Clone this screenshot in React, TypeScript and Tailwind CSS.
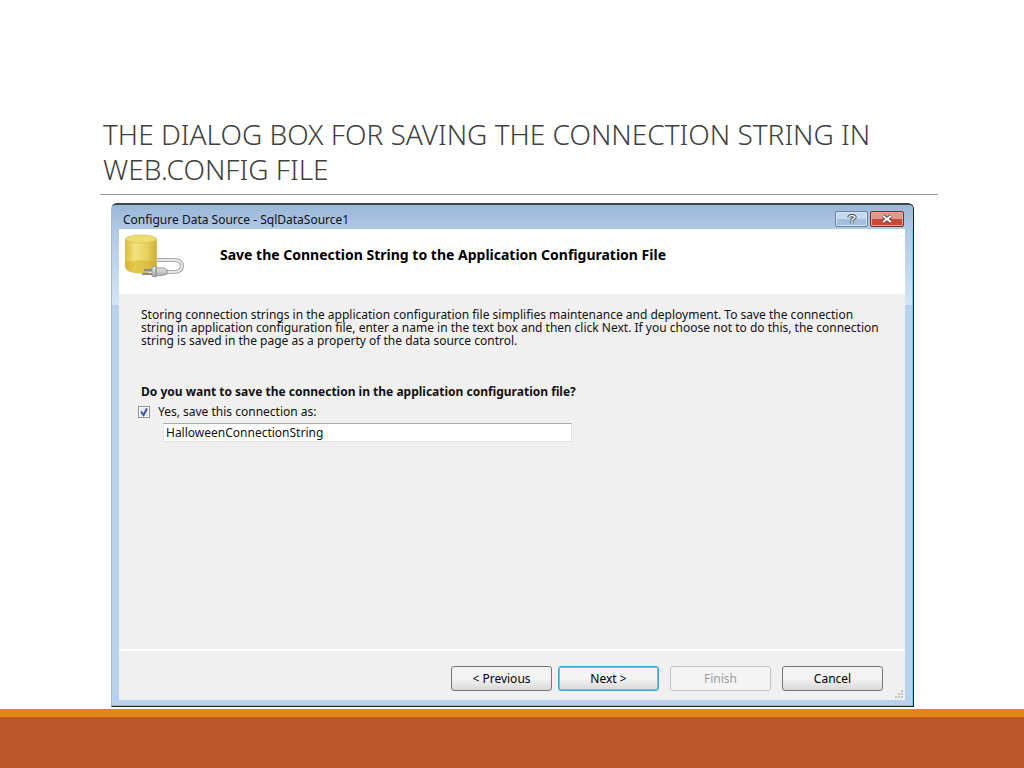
import React, { useState } from 'react';
import clsx from 'clsx';

const DatabasePlugIcon: React.FC = () => (
  <svg width="62" height="46" viewBox="0 0 62 46" aria-hidden="true">
    <defs>
      <linearGradient id="cylinder" x1="0" x2="1" y1="0" y2="0">
        <stop offset="0" stopColor="#dcbc3c" />
        <stop offset="0.3" stopColor="#f3e480" />
        <stop offset="0.7" stopColor="#e6d05c" />
        <stop offset="1" stopColor="#cdb03a" />
      </linearGradient>
      <linearGradient id="plug" x1="0" x2="0" y1="0" y2="1">
        <stop offset="0" stopColor="#f4f4f4" />
        <stop offset="1" stopColor="#a2a2a2" />
      </linearGradient>
    </defs>
    <path d="M1.500 6v28c0 3.500 7 6 15.500 6s15.500-2.500 15.500-6V6z" fill="url(#cylinder)" stroke="#d0b548" strokeWidth="0.800" />
    <path d="M2 29c7-2 23-2 30 0v5c0 3.500-7 5.500-15 5.500S2 37.500 2 34z" fill="#d2ae1d" opacity="0.500" />
    <ellipse cx="17" cy="6" rx="15.500" ry="4" fill="#eddd70" stroke="#d8c056" strokeWidth="0.800" />
    <path d="M33 27h16c6 0 9 2 9 6s-3 6-9 6h-7" fill="none" stroke="#a8a8a8" strokeWidth="4" />
    <path d="M33 27h16c6 0 9 2 9 6s-3 6-9 6h-7" fill="none" stroke="#e6e6e6" strokeWidth="2" />
    <path d="M20 37h9M18 41h10" stroke="#8a8a8a" strokeWidth="2" />
    <path d="M28 34l4-1v11l-4-1zM32 35l8 0 3 2v4l-3 1-8 1z" fill="url(#plug)" stroke="#949494" strokeWidth="1" />
  </svg>
);

const wizardButtons = [
  { label: '< Previous', look: 'border-[#767676] text-black' },
  { label: 'Next >', look: 'border-[#3ba3d0] text-black shadow-[inset_0_0_0_1px_#6cc5e8]' },
  { label: 'Finish', look: 'border-[#c3c3c3] text-[#9c9c9c]', disabled: true },
  { label: 'Cancel', look: 'border-[#767676] text-black' },
];

const ConfigureDialog: React.FC = () => {
  const [saveConnection, setSaveConnection] = useState(true);
  const [name, setName] = useState('HalloweenConnectionString');

  return (
    <section
      aria-label="Configure Data Source"
      className="mt-2 ml-[11px] mr-6 rounded-t-md border border-t-2 border-[#14222c] border-t-[#3c444c] border-l-[#a3bad2] bg-[#b9d1ea] bg-linear-to-b from-[#a5c0de] to-[#d3e5f5] bg-[length:100%_100px] bg-no-repeat pr-2 pb-[6px] pl-[7px] font-['Noto_Sans',sans-serif] text-[12px] leading-[13px] text-[#111] shadow-[inset_-1px_-1px_0_#67d0f2]"
    >
      <header className="-mr-2 -ml-[7px] flex h-6 items-center rounded-t bg-linear-to-b from-[#9ab7d8] to-[#b0c9e5] pr-[9px] pl-[11px]">
        <span className="flex-1 pt-1">Configure Data Source - SqlDataSource1</span>
        <div className="flex gap-[2px] pt-1">
          <button aria-label="Help" className="flex h-4 w-[33px] items-center justify-center rounded-xs border border-[#68809c] bg-linear-to-b from-[#c6d9ec] from-50% to-[#a3bfdc] to-50% shadow-[inset_0_0_0_1px_#d4e4f3]">
            <svg width="10" height="10" viewBox="0 0 10 10">
              <path d="M2 3.500C2 1 8 1 8 3.300C8 4.800 5 4.500 5 6.400M5 7.600v1.600" fill="none" stroke="#4c5666" strokeWidth="3.400" />
              <path d="M2 3.500C2 1 8 1 8 3.300C8 4.800 5 4.500 5 6.400M5 7.600v1.600" fill="none" stroke="#fff" strokeWidth="1.400" />
            </svg>
          </button>
          <button aria-label="Close" className="flex h-4 w-[34px] items-center justify-center rounded-xs border border-[#762f2b] bg-linear-to-b from-[#e09a8c] from-50% to-[#c84a36] to-50% shadow-[inset_0_0_0_1px_#e9a497]">
            <svg width="12" height="10" viewBox="0 0 12 10">
              <path d="M2 2l8 6M10 2L2 8" stroke="#6a3d42" strokeWidth="4" />
              <path d="M2 2l8 6M10 2L2 8" stroke="#fff" strokeWidth="2" />
            </svg>
          </button>
        </div>
      </header>

      <div className="bg-[#f0f0f0]">
        <div className="flex h-[65px] bg-white pl-[5px]">
          <div className="w-24 pt-1">
            <DatabasePlugIcon />
          </div>
          <h2 className="pt-[19px] text-[14px] font-bold text-black">Save the Connection String to the Application Configuration File</h2>
        </div>

        <div className="h-[355px] pt-[14px] pr-5 pl-[22px]">
          <p>
            Storing connection strings in the application configuration file simplifies maintenance and deployment. To save the connection
            string in application configuration file, enter a name in the text box and then click Next. If you choose not to do this, the connection
            string is saved in the page as a property of the data source control.
          </p>
          <h3 className="mt-[38px] font-bold">Do you want to save the connection in the application configuration file?</h3>
          <label className="-ml-[3px] mt-[7px] flex items-center gap-2">
            <span className="grid h-3 w-3 place-items-center">
              <input
                type="checkbox"
                checked={saveConnection}
                onChange={(e) => setSaveConnection(e.target.checked)}
                className="col-start-1 row-start-1 h-3 w-3 appearance-none border border-[#8e8f8f] bg-[#e4e8f0] shadow-[inset_0_0_0_1px_#fff]"
              />
              {saveConnection && (
                <svg className="pointer-events-none col-start-1 row-start-1" width="10" height="10" viewBox="0 0 10 10">
                  <path d="M2 4.500l2.500 3.500L8 1.500" fill="none" stroke="#46569a" strokeWidth="2" />
                </svg>
              )}
            </span>
            Yes, save this connection as:
          </label>
          <input
            type="text"
            aria-label="Connection name"
            value={name}
            disabled={!saveConnection}
            onChange={(e) => setName(e.target.value)}
            className="mt-[5px] ml-[22px] block h-[19px] w-[55%] border border-[#e0e3e8] border-t-[#a6a9b1] bg-white px-[2px]"
          />
        </div>

        <footer className="relative flex justify-end gap-[6px] border-t-2 border-white pt-[15px] pr-[22px] pb-[9px]">
          {wizardButtons.map((button) => (
            <button
              key={button.label}
              disabled={button.disabled}
              className={clsx(
                'h-[25px] w-[101px] rounded-[3px] border',
                button.disabled ? 'ml-[5px] bg-[#f4f4f4]' : 'bg-linear-to-b from-[#f3f3f3] from-50% to-[#d8d8d8]',
                button.label === 'Cancel' && 'ml-[5px]',
                button.look,
              )}
            >
              {button.label}
            </button>
          ))}
          <svg className="absolute right-px bottom-px" width="9" height="9" viewBox="0 0 9 9" fill="#c4c4c4" aria-hidden="true">
            <path d="M6 0h2v2H6zM3 3h2v2H3zM6 3h2v2H6zM0 6h2v2H0zM3 6h2v2H3zM6 6h2v2H6z" />
          </svg>
        </footer>
      </div>
    </section>
  );
};

export default function App() {
  return (
    <div className="flex min-h-screen flex-col bg-white">
      <main className="flex-1 pt-[117px] pr-[86px] pl-[100px]">
        <h1 className="border-b border-[#9a9a9a] pr-10 pb-[7px] pl-[3px] font-['Noto_Sans',sans-serif] text-[28px] leading-[35px] font-light text-[#404040]">
          THE DIALOG BOX FOR SAVING THE CONNECTION STRING IN WEB.CONFIG FILE
        </h1>
        <ConfigureDialog />
      </main>
      <div className="h-[59px] border-t-8 border-[#e38517] bg-[#bd582b]" />
    </div>
  );
}
